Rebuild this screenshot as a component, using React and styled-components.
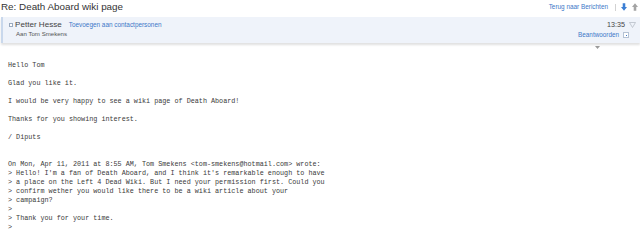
import styled, { createGlobalStyle } from "styled-components"

const Global = createGlobalStyle`
    body {
        margin: 0;
        background: #ffffff;
        font-family: "Liberation Sans", Arial, sans-serif;
        color: #333333;
    }
`

const mensagem = `Hello Tom

Glad you like it.

I would be very happy to see a wiki page of Death Aboard!

Thanks for you showing interest.

/ Diputs


On Mon, Apr 11, 2011 at 8:55 AM, Tom Smekens <tom-smekens@hotmail.com> wrote:
> Hello! I'm a fan of Death Aboard, and I think it's remarkable enough to have
> a place on the Left 4 Dead Wiki. But I need your permission first. Could you
> confirm wether you would like there to be a wiki article about your
> campaign?
>
> Thank you for your time.
>`

export default function App() {
    return (
        <>
            <Global />
            <Pagina>
                <Topo>
                    <Titulo>Re: Death Aboard wiki page</Titulo>
                    <Navegacao>
                        <Link tamanho="6.4px">Terug naar Berichten</Link>
                        <Separador />
                        <Seta cor="#3b7fd4" />
                        <Seta cor="#a4a4a4" paraCima />
                    </Navegacao>
                </Topo>
                <Cabecalho>
                    <Remetente>
                        <Linha>
                            <Marcador />
                            <Nome>Petter Hesse</Nome>
                            <Link tamanho="6.4px">Toevoegen aan contactpersonen</Link>
                        </Linha>
                        <Destino>Aan Tom Smekens</Destino>
                    </Remetente>
                    <Acoes>
                        <Linha>
                            <Hora>13:35</Hora>
                            <Funil width="7" height="6" viewBox="0 0 7 6">
                                <path d="M0.5 0.5 H6.5 L3.5 5.5 Z" fill="none" stroke="#b8bec8" strokeWidth="0.8" />
                            </Funil>
                        </Linha>
                        <Linha>
                            <Link tamanho="6.35px">Beantwoorden</Link>
                            <Caixinha><span /></Caixinha>
                        </Linha>
                    </Acoes>
                </Cabecalho>
                <Dobra>
                    <svg width="5" height="3" viewBox="0 0 5 3">
                        <path d="M0 0 H5 L2.5 3 Z" fill="#9a9a9a" />
                    </svg>
                </Dobra>
                <Corpo>{mensagem}</Corpo>
            </Pagina>
        </>
    )
}

function Seta({ cor, paraCima }) {
    return (
        <SetaIcone width="6" height="8" viewBox="0 0 7 9" $paraCima={paraCima}>
            <path d="M2 0 H5 V4.5 H7 L3.5 9 L0 4.5 H2 Z" fill={cor} />
        </SetaIcone>
    )
}

const Pagina = styled.div`
    width: 640px;
    height: 243px;
    overflow: hidden;
`
const Topo = styled.div`
    height: 17px;
    display: flex;
    justify-content: space-between;
    align-items: flex-start;
    padding: 0 2px 0 1px;
`
const Titulo = styled.h1`
    margin: 0;
    font-size: 9.85px;
    font-weight: 400;
    color: #333333;
    line-height: 13px;
`
const Navegacao = styled.div`
    display: flex;
    align-items: center;
    padding-top: 2px;
`
const Link = styled.span`
    font-size: ${p => p.tamanho || "6.4px"};
    color: #3d78c8;
    line-height: 10px;
    white-space: nowrap;
`
const Separador = styled.span`
    width: 1px;
    height: 7px;
    background: #d2d2d2;
    margin: 0 5px 0 7px;
`
const SetaIcone = styled.svg`
    transform: ${p => (p.$paraCima ? "rotate(180deg)" : "none")};
    & + & {
        margin-left: 5px;
    }
`
const Cabecalho = styled.div`
    box-sizing: border-box;
    height: 26px;
    margin-left: 1px;
    background: #eff3fa;
    border-left: 2px solid #c9d8ec;
    box-shadow: 0 2px 2px rgba(0, 0, 0, 0.12);
    display: flex;
    justify-content: space-between;
    padding: 3px 4px 0 6px;
`
const Remetente = styled.div`
    display: flex;
    flex-direction: column;
`
const Linha = styled.div`
    display: flex;
    align-items: center;
    height: 10px;
`
const Marcador = styled.span`
    width: 2px;
    height: 2px;
    border: 1px solid #9aaabf;
    background: #ffffff;
    margin-right: 2px;
`
const Nome = styled.span`
    font-size: 8.1px;
    color: #444444;
    line-height: 10px;
    margin-right: 7px;
`
const Destino = styled.span`
    font-size: 6.1px;
    color: #555555;
    margin-left: 7px;
    line-height: 7px;
`
const Acoes = styled.div`
    display: flex;
    flex-direction: column;
    align-items: flex-end;
`
const Hora = styled.span`
    font-size: 7.2px;
    color: #444444;
    line-height: 10px;
`
const Funil = styled.svg`
    margin-left: 4px;
`
const Caixinha = styled.span`
    width: 4px;
    height: 4px;
    border: 1px solid #b5c2d4;
    background: #ffffff;
    display: flex;
    align-items: center;
    justify-content: center;
    margin: 0 7px 0 4px;

    span {
        width: 1px;
        height: 1px;
        background: #3d78c8;
    }
`
const Dobra = styled.div`
    display: flex;
    justify-content: flex-end;
    padding: 3px 40px 0 0;
    height: 3px;
`
const Corpo = styled.pre`
    margin: 12px 0 0 8px;
    font-family: "Liberation Mono", "Courier New", monospace;
    font-size: 6.77px;
    line-height: 9px;
    color: #3a3a3a;
`
